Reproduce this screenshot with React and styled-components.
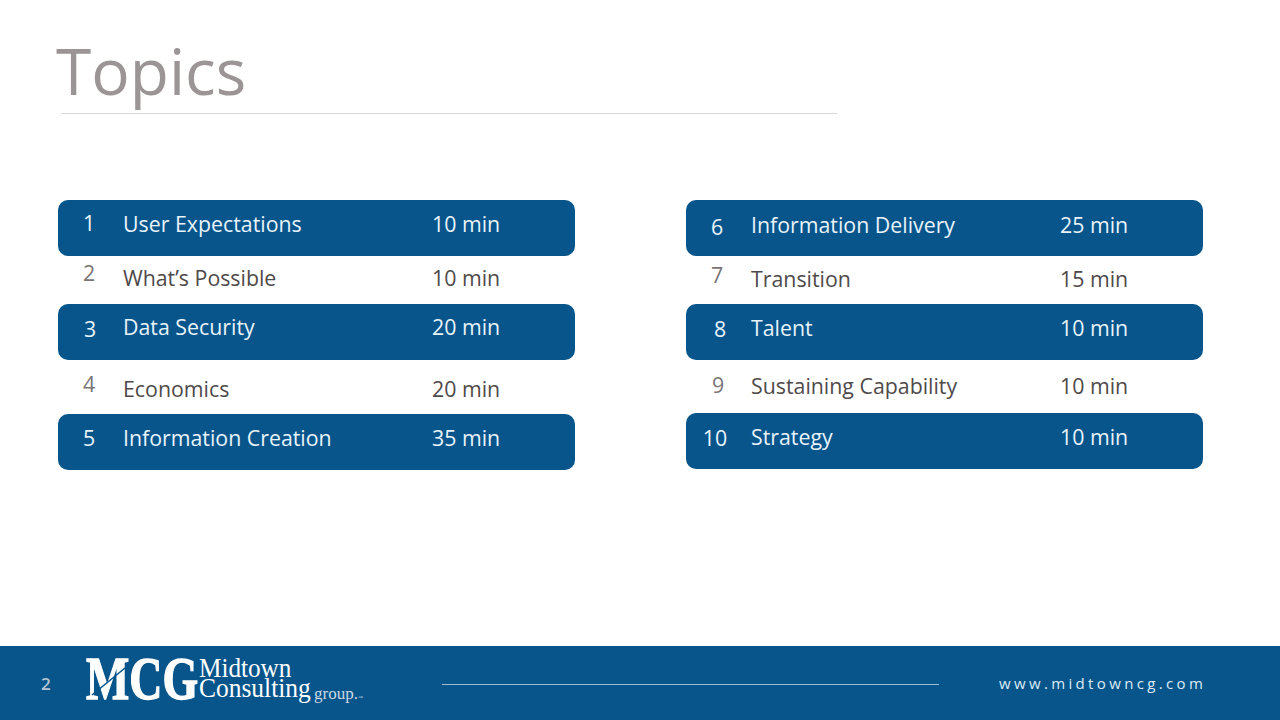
import React from "react";
import styled, { createGlobalStyle } from "styled-components";

const GlobalStyle = createGlobalStyle`
    html, body {
        margin: 0;
        padding: 0;
        background: #fff;
    }
    body {
        font-family: "Open Sans", "Liberation Sans", sans-serif;
    }
`;

const Slide = styled.div`
    width: 1280px;
    height: 720px;
    display: flex;
    flex-direction: column;
    overflow: hidden;
`;

const Header = styled.header`
    height: 200px;
    box-sizing: border-box;
    padding: 31px 0 0 56px;
`;

const Title = styled.h1`
    margin: 0;
    height: 82px;
    font-size: 64px;
    line-height: 80px;
    font-weight: 400;
    color: #9b9595;
`;

const TitleRule = styled.div`
    width: 776px;
    height: 1px;
    margin-left: 5px;
    background: #d8d8d8;
`;

const Columns = styled.main`
    flex: 1;
    display: flex;
    gap: 111px;
    padding-left: 58px;
`;

const Column = styled.div`
    width: 517px;
    display: flex;
    flex-direction: column;
`;

const Row = styled.div`
    height: ${({ $height }) => $height}px;
    display: grid;
    grid-template-columns: 65px 309px 1fr;
    align-items: start;
    border-radius: 10px;
    font-size: 21.33px;
    line-height: 30px;
    background: ${({ $filled }) => ($filled ? "#07558b" : "transparent")};
    color: ${({ $filled }) => ($filled ? "#e8f3fa" : "#4f4a4a")};
`;

const Num = styled.span`
    width: 62px;
    margin-left: ${({ $x }) => $x}px;
    margin-top: ${({ $y }) => $y}px;
    text-align: center;
    color: ${({ $filled }) => ($filled ? "#e8f3fa" : "#7a7575")};
`;

const Label = styled.span`
    margin-top: ${({ $y }) => $y}px;
    white-space: nowrap;
`;

const Footer = styled.footer`
    height: 74px;
    display: flex;
    align-items: center;
    background: #07558b;
`;

const PageNo = styled.span`
    width: 86px;
    box-sizing: border-box;
    padding-left: 41px;
    font-size: 17px;
    font-weight: 600;
    color: #b5c6d3;
`;

const LogoSvg = styled.svg`
    width: 280px;
    height: 56px;
    flex: none;
    overflow: visible;
`;

const FooterRule = styled.div`
    width: 497px;
    height: 1px;
    margin: 2px 0 0 76px;
    background: #9fbdd3;
`;

const Url = styled.span`
    margin-left: 60px;
    font-size: 15px;
    letter-spacing: 3.35px;
    white-space: nowrap;
    color: #dcebf5;
`;

const LOGO_FONT = "Liberation Serif, serif";

const Logo = () => (
    <LogoSvg viewBox="0 0 280 56">
        <text
            transform="translate(0 44) scale(0.74 1)"
            fontFamily={LOGO_FONT}
            fontWeight="700"
            fontSize="62"
            stroke="#fff"
            strokeWidth="1.4"
            fill="#fff"
        >
            MCG
        </text>
        <path d="M6 40 L39 13" stroke="#07558b" strokeWidth="1.6" fill="none" />
        <text transform="translate(113 22) scale(0.9 1)" fontFamily={LOGO_FONT} fontSize="28" fill="#fff">
            Midtown
        </text>
        <text transform="translate(113 42) scale(0.91 1)" fontFamily={LOGO_FONT} fontSize="28" fill="#fff">
            Consulting
        </text>
        <text x="228" y="44" fontFamily={LOGO_FONT} fontSize="17" fill="#c9d9e5">
            group.
        </text>
        <text x="272" y="44" fontFamily={LOGO_FONT} fontSize="5" fill="#c9d9e5">
            ™
        </text>
    </LogoSvg>
);

const leftTopics = [
    { n: 1, label: "User Expectations", time: "10 min", h: 56, filled: true, x: 0, ny: 8, ly: 9 },
    { n: 2, label: "What’s Possible", time: "10 min", h: 48, x: 0, ny: 2, ly: 7 },
    { n: 3, label: "Data Security", time: "20 min", h: 56, filled: true, x: 1, ny: 10, ly: 8 },
    { n: 4, label: "Economics", time: "20 min", h: 54, x: 0, ny: 9, ly: 14 },
    { n: 5, label: "Information Creation", time: "35 min", h: 56, filled: true, x: 0, ny: 9, ly: 9 },
];

const rightTopics = [
    { n: 6, label: "Information Delivery", time: "25 min", h: 56, filled: true, x: 0, ny: 12, ly: 10 },
    { n: 7, label: "Transition", time: "15 min", h: 48, x: 0, ny: 4, ly: 8 },
    { n: 8, label: "Talent", time: "10 min", h: 56, filled: true, x: 3, ny: 10, ly: 9 },
    { n: 9, label: "Sustaining Capability", time: "10 min", h: 53, x: 1, ny: 10, ly: 11 },
    { n: 10, label: "Strategy", time: "10 min", h: 56, filled: true, x: -2, ny: 10, ly: 9 },
];

const TopicColumn = ({ topics }) => (
    <Column>
        {topics.map((t) => (
            <Row key={t.n} $height={t.h} $filled={t.filled}>
                <Num $x={t.x} $y={t.ny} $filled={t.filled}>{t.n}</Num>
                <Label $y={t.ly}>{t.label}</Label>
                <Label $y={t.ly}>{t.time}</Label>
            </Row>
        ))}
    </Column>
);

export default function App() {
    return (
        <Slide>
            <GlobalStyle />
            <Header>
                <Title>Topics</Title>
                <TitleRule />
            </Header>
            <Columns>
                <TopicColumn topics={leftTopics} />
                <TopicColumn topics={rightTopics} />
            </Columns>
            <Footer>
                <PageNo>2</PageNo>
                <Logo />
                <FooterRule />
                <Url>www.midtowncg.com</Url>
            </Footer>
        </Slide>
    );
}
